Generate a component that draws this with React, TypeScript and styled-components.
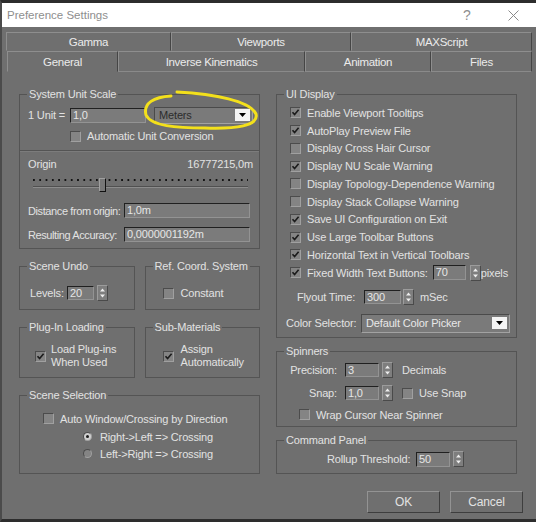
import styled, { createGlobalStyle } from 'styled-components';

const BG = '#6f6f6f';
const TEXT = '#e2e2e2';

const GlobalStyle = createGlobalStyle`
  html, body {
    margin: 0;
    padding: 0;
    background: #2e2e2e;
  }
  body {
    font-family: 'Liberation Sans', Arial, sans-serif;
  }
`;

const Window = styled.div`
  position: relative;
  box-sizing: border-box;
  width: 536px;
  height: 522px;
  overflow: hidden;
  display: flex;
  flex-direction: column;
  background: ${BG};
  border-top: 3px solid #2d2d2d;
  border-bottom: 3px solid #2d2d2d;
  border-left: 2px solid #4b4b4b;
  font-size: 11px;
  letter-spacing: -0.15px;
  color: ${TEXT};
`;

const TitleBar = styled.div`
  height: 24px;
  flex-shrink: 0;
  display: flex;
  align-items: center;
  margin-left: -2px;
  padding-left: 7px;
  background: #fff;
  color: #8e8e8e;
  font-size: 11.5px;
  letter-spacing: 0;
`;

const TitleText = styled.span`
  flex: 1;
`;

const TitleButton = styled.div`
  width: 46px;
  height: 24px;
  display: flex;
  align-items: center;
  justify-content: center;
  color: #8e8e8e;
  font-size: 14px;
`;

const TabRow = styled.div<{ $h: number; $pad: number; $top?: number }>`
  display: flex;
  flex-shrink: 0;
  height: ${(p) => p.$h}px;
  margin-top: ${(p) => p.$top ?? 0}px;
  padding-left: ${(p) => p.$pad}px;
`;

const Tab = styled.div<{ $w: number; $under?: boolean }>`
  box-sizing: border-box;
  width: ${(p) => p.$w}px;
  display: flex;
  align-items: center;
  justify-content: center;
  border-top: 1px solid #8e8e8e;
  border-left: 1px solid #8e8e8e;
  border-right: 1px solid #454545;
  border-bottom: 1px solid ${(p) => (p.$under ? '#8a8a8a' : 'transparent')};
  color: #ebebeb;
  font-size: 11.5px;
  letter-spacing: -0.3px;
`;

const Body = styled.div`
  flex: 1;
  display: grid;
  grid-template-columns: 241px 241px;
  column-gap: 16px;
  align-items: start;
  padding: 22px 0 0 17px;
`;

const Column = styled.div<{ $gap: number }>`
  display: flex;
  flex-direction: column;
  gap: ${(p) => p.$gap}px;
`;

const Pair = styled.div`
  display: grid;
  grid-template-columns: 1fr 1fr;
  column-gap: 10px;
`;

const Group = styled.div<{ $h: number }>`
  box-sizing: border-box;
  height: ${(p) => p.$h}px;
  border: 1px solid #545454;
  display: flex;
  flex-direction: column;
`;

const GroupTitle = styled.div`
  align-self: flex-start;
  margin: -7px 0 0 7px;
  padding: 0 2px;
  line-height: 13px;
  white-space: nowrap;
  background: ${BG};
`;

const Row = styled.div<{ $mt?: number; $pl?: number; $h?: number; $gap?: number }>`
  display: flex;
  align-items: center;
  height: ${(p) => p.$h ?? 16}px;
  margin-top: ${(p) => p.$mt ?? 0}px;
  padding-left: ${(p) => p.$pl ?? 0}px;
  gap: ${(p) => p.$gap ?? 0}px;
  white-space: nowrap;
`;

const CheckList = styled.div`
  margin-top: 3px;
`;

const SpreadRow = styled.div`
  display: flex;
  justify-content: space-between;
  margin-top: 6px;
  padding: 0 6px 0 8px;
  line-height: 13px;
`;

const Label = styled.span<{ $w?: number; $right?: boolean; $ml?: number }>`
  display: inline-block;
  width: ${(p) => (p.$w ? `${p.$w}px` : 'auto')};
  margin-left: ${(p) => p.$ml ?? 0}px;
  text-align: ${(p) => (p.$right ? 'right' : 'left')};
  flex-shrink: 0;
`;

const GridLabel = styled.span`
  letter-spacing: -0.4px;
`;

const Inline = styled.span<{ $ml?: number }>`
  display: flex;
  align-items: center;
  gap: 6px;
  margin-left: ${(p) => p.$ml ?? 0}px;
`;

const Lines = styled.span`
  line-height: 13px;
`;

const Field = styled.div<{ $w: number; $h?: number; $ml?: number }>`
  box-sizing: border-box;
  width: ${(p) => p.$w}px;
  height: ${(p) => p.$h ?? 15}px;
  margin-left: ${(p) => p.$ml ?? 0}px;
  flex-shrink: 0;
  background: #7b7b7b;
  border-style: solid;
  border-width: 1px;
  border-color: #202020 #939393 #939393 #202020;
  padding-left: 2px;
  line-height: 13px;
  color: #e6e6e6;
  overflow: hidden;
`;

const SpinBox = styled.div<{ $ml?: number }>`
  box-sizing: border-box;
  width: 11px;
  height: 16px;
  margin-left: ${(p) => p.$ml ?? 3}px;
  flex-shrink: 0;
  background: #7e7e7e;
  border: 1px solid;
  border-color: #9c9c9c #4a4a4a #4a4a4a #9c9c9c;
  display: flex;
  align-items: center;
  justify-content: center;
`;

const Box = styled.span<{ $round?: boolean; $lit?: boolean }>`
  box-sizing: border-box;
  width: ${(p) => (p.$round ? 9 : 11)}px;
  height: ${(p) => (p.$round ? 9 : 11)}px;
  flex-shrink: 0;
  border-radius: ${(p) => (p.$round ? '50%' : '0')};
  background: ${(p) => (p.$lit ? '#cfcfcf' : '#848484')};
  border: 1px solid;
  border-color: #4c4c4c #a0a0a0 #a0a0a0 #4c4c4c;
  display: flex;
  align-items: center;
  justify-content: center;
`;

const Dot = styled.span`
  width: 3px;
  height: 3px;
  border-radius: 50%;
  background: #1c1c1c;
`;

const Select = styled.div<{ $w: number; $h: number; $ml?: number; $dark?: boolean }>`
  box-sizing: border-box;
  width: ${(p) => p.$w}px;
  height: ${(p) => p.$h}px;
  margin-left: ${(p) => p.$ml ?? 0}px;
  display: flex;
  align-items: center;
  padding: 0 2px 0 4px;
  background: #7a7a7a;
  border: 1px solid;
  border-color: #4a4a4a #a2a2a2 #a2a2a2 #4a4a4a;
  color: ${(p) => (p.$dark ? '#2c2c2c' : '#e8e8e8')};
`;

const SelectText = styled.span`
  flex: 1;
`;

const SelectArrow = styled.span`
  width: 15px;
  height: 12px;
  background: #f4f4f4;
  display: flex;
  align-items: center;
  justify-content: center;
`;

const Separator = styled.div`
  margin-top: 8px;
  border-top: 1px solid #545454;
  border-bottom: 1px solid #7c7c7c;
`;

const Slider = styled.div`
  position: relative;
  width: 215px;
  height: 17px;
  margin: 5px 0 0 13px;
`;

const Dots = styled.div`
  height: 2px;
  margin-top: 3px;
  background-image: linear-gradient(to right, #121212 2px, transparent 2px);
  background-size: 6.3px 2px;
`;

const Groove = styled.div`
  height: 0;
  margin-top: 5px;
  border-top: 1px solid #505050;
  border-bottom: 1px solid #8c8c8c;
`;

const Thumb = styled.div`
  position: absolute;
  left: 66px;
  top: 2px;
  box-sizing: border-box;
  width: 7px;
  height: 14px;
  background: #777;
  border: 1px solid;
  border-color: #a0a0a0 #111 #111 #a0a0a0;
`;

const FieldGrid = styled.div`
  display: grid;
  grid-template-columns: 96px 126px;
  row-gap: 9px;
  align-items: center;
  margin-top: 10px;
  padding-left: 8px;
  white-space: nowrap;
`;

const ButtonRow = styled.div`
  display: flex;
  justify-content: flex-end;
  gap: 10px;
  margin: 4px -6px 0 0;
`;

const Button = styled.div`
  box-sizing: border-box;
  width: 73px;
  height: 22px;
  display: flex;
  align-items: center;
  justify-content: center;
  background: ${BG};
  border: 1px solid;
  border-color: #939393 #3e3e3e #3e3e3e #939393;
  font-size: 12px;
`;

const Annotation = styled.svg`
  position: absolute;
  left: -2px;
  top: -3px;
  pointer-events: none;
`;

const Check = ({ on }: { on?: boolean }) => (
  <Box>
    {on && (
      <svg width="9" height="9" viewBox="0 0 9 9">
        <path d="M1.5 4.2 L3.6 6.6 L7.6 1.8" stroke="#1b1b1b" strokeWidth="1.6" fill="none" />
      </svg>
    )}
  </Box>
);

const Radio = ({ on }: { on?: boolean }) => (
  <Box $round $lit={on}>
    {on && <Dot />}
  </Box>
);

const Spinner = ({ ml }: { ml?: number }) => (
  <SpinBox $ml={ml}>
    <svg width="7" height="12" viewBox="0 0 7 12">
      <path d="M3.5 1.5 L6 4.5 L1 4.5 Z M1 7.5 L6 7.5 L3.5 10.5 Z" fill="#eeeeee" />
    </svg>
  </SpinBox>
);

const Dropdown = ({ text, w, h, ml, dark }: { text: string; w: number; h: number; ml?: number; dark?: boolean }) => (
  <Select $w={w} $h={h} $ml={ml} $dark={dark}>
    <SelectText>{text}</SelectText>
    <SelectArrow>
      <svg width="7" height="4" viewBox="0 0 7 4">
        <path d="M0 0 L7 0 L3.5 4 Z" fill="#000" />
      </svg>
    </SelectArrow>
  </Select>
);

const backTabs = [
  { label: 'Gamma', w: 165 },
  { label: 'Viewports', w: 180 },
  { label: 'MAXScript', w: 181 },
];

const frontTabs = [
  { label: 'General', w: 111, active: true },
  { label: 'Inverse Kinematics', w: 187 },
  { label: 'Animation', w: 126 },
  { label: 'Files', w: 101 },
];

const uiItems = [
  { label: 'Enable Viewport Tooltips', on: true },
  { label: 'AutoPlay Preview File', on: true },
  { label: 'Display Cross Hair Cursor', on: false },
  { label: 'Display NU Scale Warning', on: true },
  { label: 'Display Topology-Dependence Warning', on: false },
  { label: 'Display Stack Collapse Warning', on: false },
  { label: 'Save UI Configuration on Exit', on: true },
  { label: 'Use Large Toolbar Buttons', on: true },
  { label: 'Horizontal Text in Vertical Toolbars', on: true },
];

const App = () => {
  return (
    <>
      <GlobalStyle />
      <Window>
        <TitleBar>
          <TitleText>Preference Settings</TitleText>
          <TitleButton>?</TitleButton>
          <TitleButton>
            <svg width="11" height="11" viewBox="0 0 11 11">
              <path d="M0.5 0.5 L10.5 10.5 M10.5 0.5 L0.5 10.5" stroke="#8a8a8a" strokeWidth="1" />
            </svg>
          </TitleButton>
        </TitleBar>

        <TabRow $h={19} $pad={4} $top={5}>
          {backTabs.map((t) => (
            <Tab key={t.label} $w={t.w}>{t.label}</Tab>
          ))}
        </TabRow>
        <TabRow $h={21} $pad={5}>
          {frontTabs.map((t) => (
            <Tab key={t.label} $w={t.w} $under={!t.active}>{t.label}</Tab>
          ))}
        </TabRow>

        <Body>
          <Column $gap={17}>
            <Group $h={155}>
              <GroupTitle>System Unit Scale</GroupTitle>
              <Row $mt={5} $pl={8} $h={18}>
                <Label $w={42}>1 Unit =</Label>
                <Field $w={76}>1,0</Field>
                <Dropdown text="Meters" w={99} h={17} ml={8} dark />
              </Row>
              <Row $mt={6} $pl={50} $h={12} $gap={6}>
                <Check />
                <span>Automatic Unit Conversion</span>
              </Row>
              <Separator />
              <SpreadRow>
                <span>Origin</span>
                <span>16777215,0m</span>
              </SpreadRow>
              <Slider>
                <Dots />
                <Groove />
                <Thumb />
              </Slider>
              <FieldGrid>
                <GridLabel>Distance from origin:</GridLabel>
                <Field $w={126}>1,0m</Field>
                <GridLabel>Resulting Accuracy:</GridLabel>
                <Field $w={126}>0,0000001192m</Field>
              </FieldGrid>
            </Group>

            <Pair>
              <Group $h={44}>
                <GroupTitle>Scene Undo</GroupTitle>
                <Row $mt={12} $pl={10}>
                  <Label $w={37}>Levels:</Label>
                  <Field $w={27} $h={14}>20</Field>
                  <Spinner />
                </Row>
              </Group>
              <Group $h={44}>
                <GroupTitle>Ref. Coord. System</GroupTitle>
                <Row $mt={12} $pl={17} $gap={7}>
                  <Check />
                  <span>Constant</span>
                </Row>
              </Group>
            </Pair>

            <Pair>
              <Group $h={51}>
                <GroupTitle>Plug-In Loading</GroupTitle>
                <Row $mt={9} $pl={15} $h={26} $gap={5}>
                  <Check on />
                  <Lines>Load Plug-ins<br />When Used</Lines>
                </Row>
              </Group>
              <Group $h={51}>
                <GroupTitle>Sub-Materials</GroupTitle>
                <Row $mt={9} $pl={17} $h={26} $gap={7}>
                  <Check on />
                  <Lines>Assign<br />Automatically</Lines>
                </Row>
              </Group>
            </Pair>

            <Group $h={79}>
              <GroupTitle>Scene Selection</GroupTitle>
              <Row $mt={10} $pl={23} $h={13} $gap={6}>
                <Check />
                <span>Auto Window/Crossing by Direction</span>
              </Row>
              <Row $mt={5} $pl={63} $h={13} $gap={8}>
                <Radio on />
                <span>Right-&gt;Left =&gt; Crossing</span>
              </Row>
              <Row $mt={4} $pl={63} $h={13} $gap={8}>
                <Radio />
                <span>Left-&gt;Right =&gt; Crossing</span>
              </Row>
            </Group>
          </Column>

          <Column $gap={13}>
            <Group $h={244}>
              <GroupTitle>UI Display</GroupTitle>
              <CheckList>
                {uiItems.map((it) => (
                  <Row key={it.label} $pl={13} $h={17.75} $gap={6}>
                    <Check on={it.on} />
                    <span>{it.label}</span>
                  </Row>
                ))}
                <Row $pl={13} $h={17.75} $gap={6}>
                  <Check on />
                  <span>Fixed Width Text Buttons:</span>
                  <Field $w={33} $ml={-1}>70</Field>
                  <Spinner ml={-2} />
                  <Label $ml={-6}>pixels</Label>
                </Row>
              </CheckList>
              <Row $mt={7} $pl={20}>
                <Label $w={67}>Flyout Time:</Label>
                <Field $w={37} $h={14}>300</Field>
                <Spinner ml={2} />
                <Label $ml={6}>mSec</Label>
              </Row>
              <Row $mt={9} $pl={9} $h={19}>
                <Label $w={75}>Color Selector:</Label>
                <Dropdown text="Default Color Picker" w={149} h={19} />
              </Row>
            </Group>

            <Group $h={76}>
              <GroupTitle>Spinners</GroupTitle>
              <Row $mt={4} $pl={9}>
                <Label $w={51} $right>Precision:</Label>
                <Field $w={34} $h={14} $ml={8}>3</Field>
                <Spinner />
                <Label $ml={9}>Decimals</Label>
              </Row>
              <Row $mt={7} $pl={9}>
                <Label $w={51} $right>Snap:</Label>
                <Field $w={34} $h={14} $ml={8}>1,0</Field>
                <Spinner />
                <Inline $ml={9}>
                  <Check />
                  Use Snap
                </Inline>
              </Row>
              <Row $mt={7} $pl={22} $h={13} $gap={6}>
                <Check />
                <span>Wrap Cursor Near Spinner</span>
              </Row>
            </Group>

            <Group $h={34}>
              <GroupTitle>Command Panel</GroupTitle>
              <Row $mt={4} $pl={50}>
                <Label $w={89}>Rollup Threshold:</Label>
                <Field $w={34} $h={15}>50</Field>
                <Spinner />
              </Row>
            </Group>

            <ButtonRow>
              <Button>OK</Button>
              <Button>Cancel</Button>
            </ButtonRow>
          </Column>
        </Body>

        <Annotation width="536" height="522" viewBox="0 0 536 522">
          <path
            d="M177 92 C 215 94, 250 101, 256 114 C 259 126, 236 129, 205 128 C 176 128, 151 126, 146 115 C 143 103, 154 97, 171 96"
            stroke="#f3e01b"
            strokeWidth="3"
            fill="none"
            strokeLinecap="round"
          />
        </Annotation>
      </Window>
    </>
  );
};

export default App;
